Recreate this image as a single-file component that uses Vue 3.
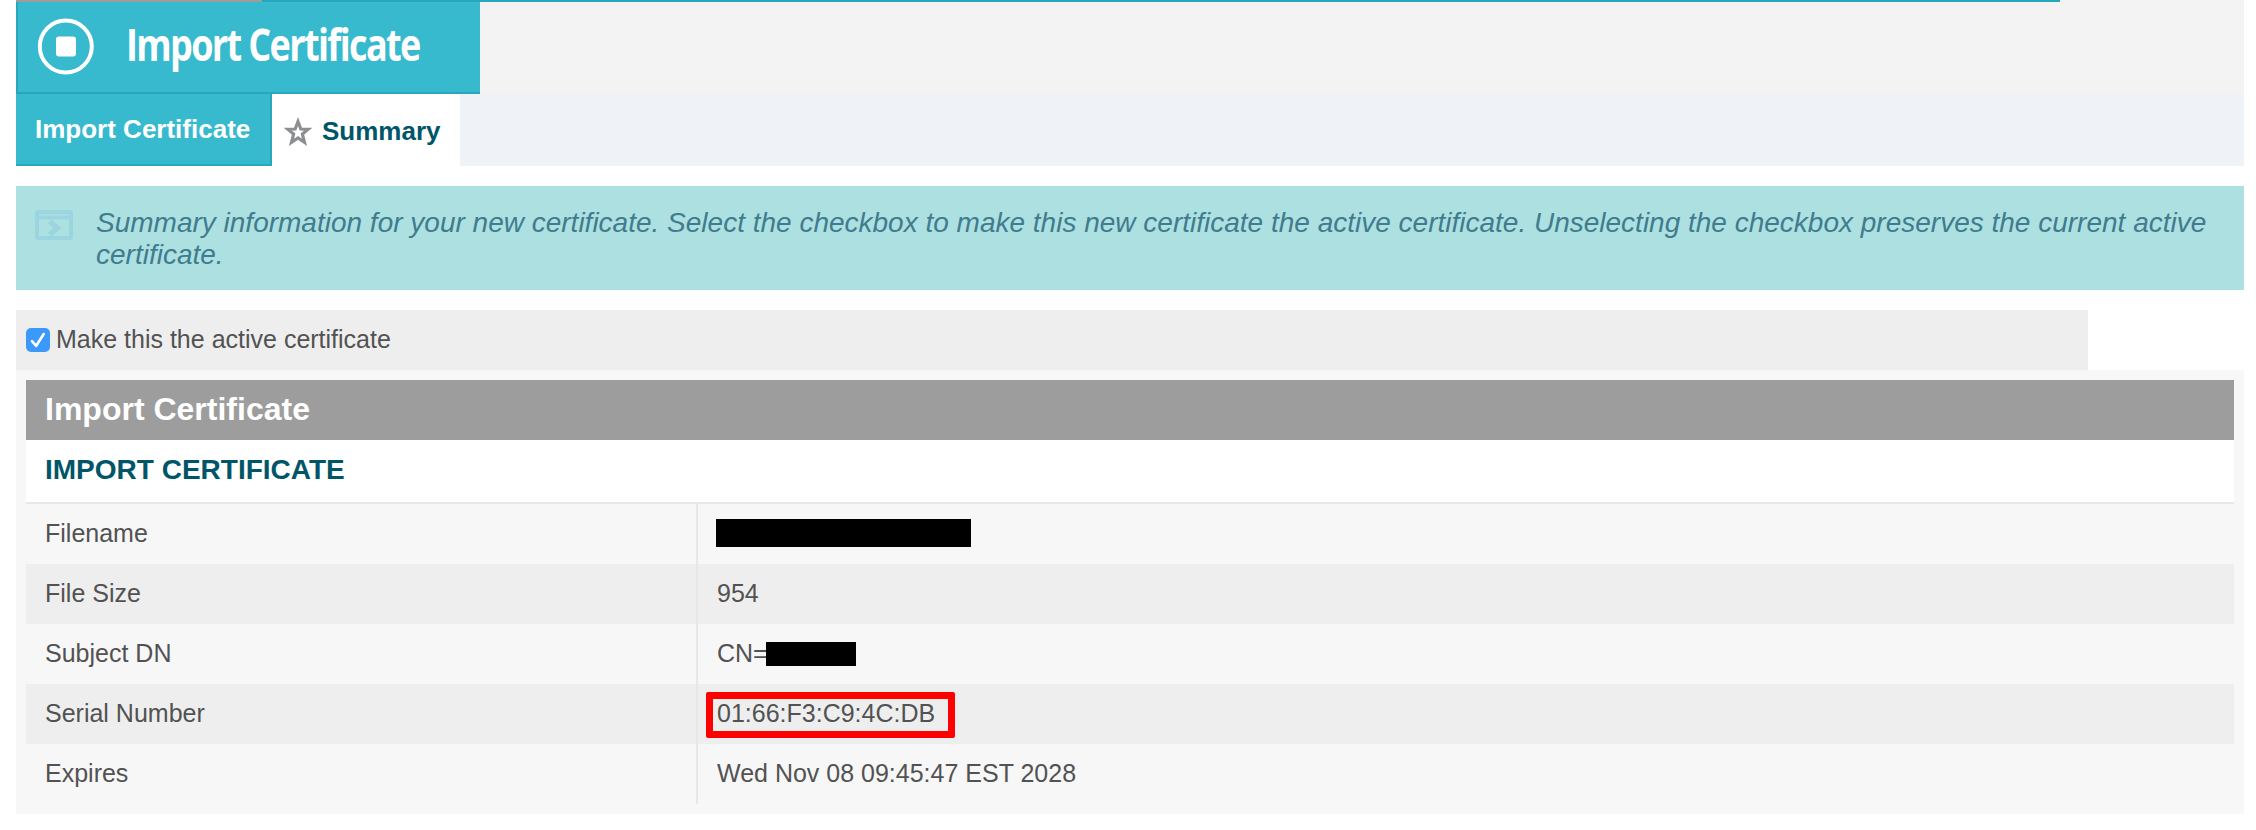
<script setup>
const rows = [
  { label: 'Filename', kind: 'redacted' },
  { label: 'File Size', value: '954' },
  { label: 'Subject DN', value: 'CN=', kind: 'partial' },
  { label: 'Serial Number', value: '01:66:F3:C9:4C:DB', kind: 'marked' },
  { label: 'Expires', value: 'Wed Nov 08 09:45:47 EST 2028' },
]
</script>

<template>
  <main class="page">
    <div class="topline"><i class="grey-line"></i><i class="teal-line"></i></div>
    <header class="header">
      <h1 class="title">
        <svg width="462" height="90" viewBox="18 2 462 90">
          <circle cx="65.8" cy="46.5" r="26" fill="none" stroke="#fff" stroke-width="4" />
          <rect x="56" y="36.5" width="20" height="20" rx="3" fill="#fff" />
          <text class="title-text" transform="translate(126 60.6) scale(.819 1)">Import Certificate</text>
        </svg>
      </h1>
    </header>
    <nav class="tabs">
      <a class="tab tab-teal">Import Certificate</a>
      <a class="tab tab-active">
        <svg class="star" width="30" height="30" viewBox="0 0 30 30">
          <path d="M15 5.5 L17.8 13 L25.2 13.2 L19.4 18.1 L21.5 26.3 L15 22 L8.5 26.3 L10.6 18.1 L4.8 13.2 L12.2 13 Z" fill="none" stroke="#8b8f8f" stroke-width="3.2" />
        </svg>
        <span>Summary</span>
      </a>
    </nav>
    <section class="info">
      <svg class="info-icon" width="38" height="30" viewBox="0 0 38 30">
        <rect x="2" y="2" width="34" height="26" rx="1" fill="none" stroke="#9bd5df" stroke-width="4" />
        <path d="M2 7.5H36" stroke="#9bd5df" stroke-width="4" />
        <path d="M4 5H6M8 5H10M12 5H34" stroke="#a7dde2" stroke-width="2" />
        <path d="M14.5 11.5L22.5 18L14.5 24.5" fill="none" stroke="#9bd5df" stroke-width="5" />
      </svg>
      <p>Summary information for your new certificate. Select the checkbox to make this new certificate the active certificate. Unselecting the checkbox preserves the current active certificate.</p>
    </section>
    <label class="activate">
      <svg width="24" height="24" viewBox="0 0 24 24">
        <rect width="24" height="24" rx="5" fill="#3b99fc" />
        <path d="M6 13.2L10.2 17.8L17.7 6" fill="none" stroke="#fff" stroke-width="2.6" stroke-linecap="round" stroke-linejoin="round" />
      </svg>
      <span>Make this the active certificate</span>
    </label>
    <section class="panel">
      <h2 class="panel-title">Import Certificate</h2>
      <h3 class="panel-sub">IMPORT CERTIFICATE</h3>
      <div v-for="row in rows" :key="row.label" class="row">
        <div class="label">{{ row.label }}</div>
        <div class="value">
          <i v-if="row.kind === 'redacted'" class="bar bar-long"></i>
          <span v-else>{{ row.value }}</span>
          <i v-if="row.kind === 'partial'" class="bar bar-short"></i>
          <i v-if="row.kind === 'marked'" class="marker"></i>
        </div>
      </div>
    </section>
  </main>
</template>

<style>
body { background: #fff; }
</style>

<style scoped>
.page {
  width: 2228px;
  height: 830px;
  margin-left: 16px;
  font-family: "Liberation Sans", Arial, sans-serif;
  font-size: 25px;
  color: #525252;
}
h1, h2, h3, p { margin: 0; }
.topline { display: flex; height: 2px; background: #f3f3f3; }
.grey-line { width: 246px; background: #9d9d9d; }
.teal-line { width: 1798px; background: #27a7bb; }
.header { height: 92px; background: #f3f3f3; }
.title {
  box-sizing: border-box;
  width: 464px;
  height: 92px;
  border-left: 2px solid #27a7bb;
  border-bottom: 2px solid #27a7bb;
  background: #37b9ce;
}
.title svg { display: block; overflow: visible; }
.title-text { font: 700 44px "Open Sans", sans-serif; letter-spacing: -2px; fill: #fff; }
.tabs { display: flex; height: 72px; background: #eff3f8; }
.tab { box-sizing: border-box; font-weight: 700; font-size: 26px; white-space: nowrap; }
.tab-teal {
  width: 256px;
  padding-left: 19px;
  line-height: 70px;
  color: #fff;
  background: #37b9ce;
  border-right: 2px solid #27a7bb;
  border-bottom: 2px solid #27a7bb;
}
.tab-active {
  display: flex;
  align-items: center;
  gap: 9px;
  width: 188px;
  padding: 2px 0 0 11px;
  background: #fff;
  color: #005668;
}
.info {
  box-sizing: border-box;
  display: flex;
  gap: 23px;
  height: 104px;
  margin-top: 20px;
  padding: 20px 20px 0 19px;
  background: #ade1e1;
  color: #417b8e;
  font-size: 28px;
  font-style: italic;
  line-height: 32px;
}
.info p { flex: 1; padding-top: 1px; }
.info-icon { flex: none; margin-top: 4px; }
.activate {
  box-sizing: border-box;
  display: flex;
  align-items: center;
  gap: 6px;
  width: 2072px;
  height: 60px;
  margin-top: 20px;
  padding-left: 10px;
  background: #eee;
}
.activate span { line-height: 58px; height: 60px; }
.panel { box-sizing: border-box; height: 444px; padding: 10px; background: #f7f7f7; }
.panel-title {
  height: 60px;
  padding-left: 19px;
  background: #9d9d9d;
  color: #fff;
  font-size: 32px;
  line-height: 58px;
}
.panel-sub {
  height: 62px;
  padding-left: 19px;
  background: #fff;
  border-bottom: 2px solid #e7e7e7;
  color: #005668;
  font-size: 28px;
  line-height: 60px;
}
.row { display: flex; height: 60px; line-height: 58px; }
.row:nth-child(even) { background: #eee; }
.label { width: 651px; padding-left: 19px; }
.value {
  position: relative;
  display: flex;
  flex: 1;
  padding-left: 19px;
  border-left: 2px solid #e7e7e7;
}
.bar { background: #000; }
.bar-long { width: 255px; height: 28px; margin: 15px 0 0 -1px; }
.bar-short { position: absolute; left: 68px; top: 18px; width: 90px; height: 24px; }
.marker {
  position: absolute;
  box-sizing: border-box;
  left: 8px;
  top: 8px;
  width: 249px;
  height: 46px;
  border: 7px solid #f00;
  border-radius: 2px;
}
</style>
